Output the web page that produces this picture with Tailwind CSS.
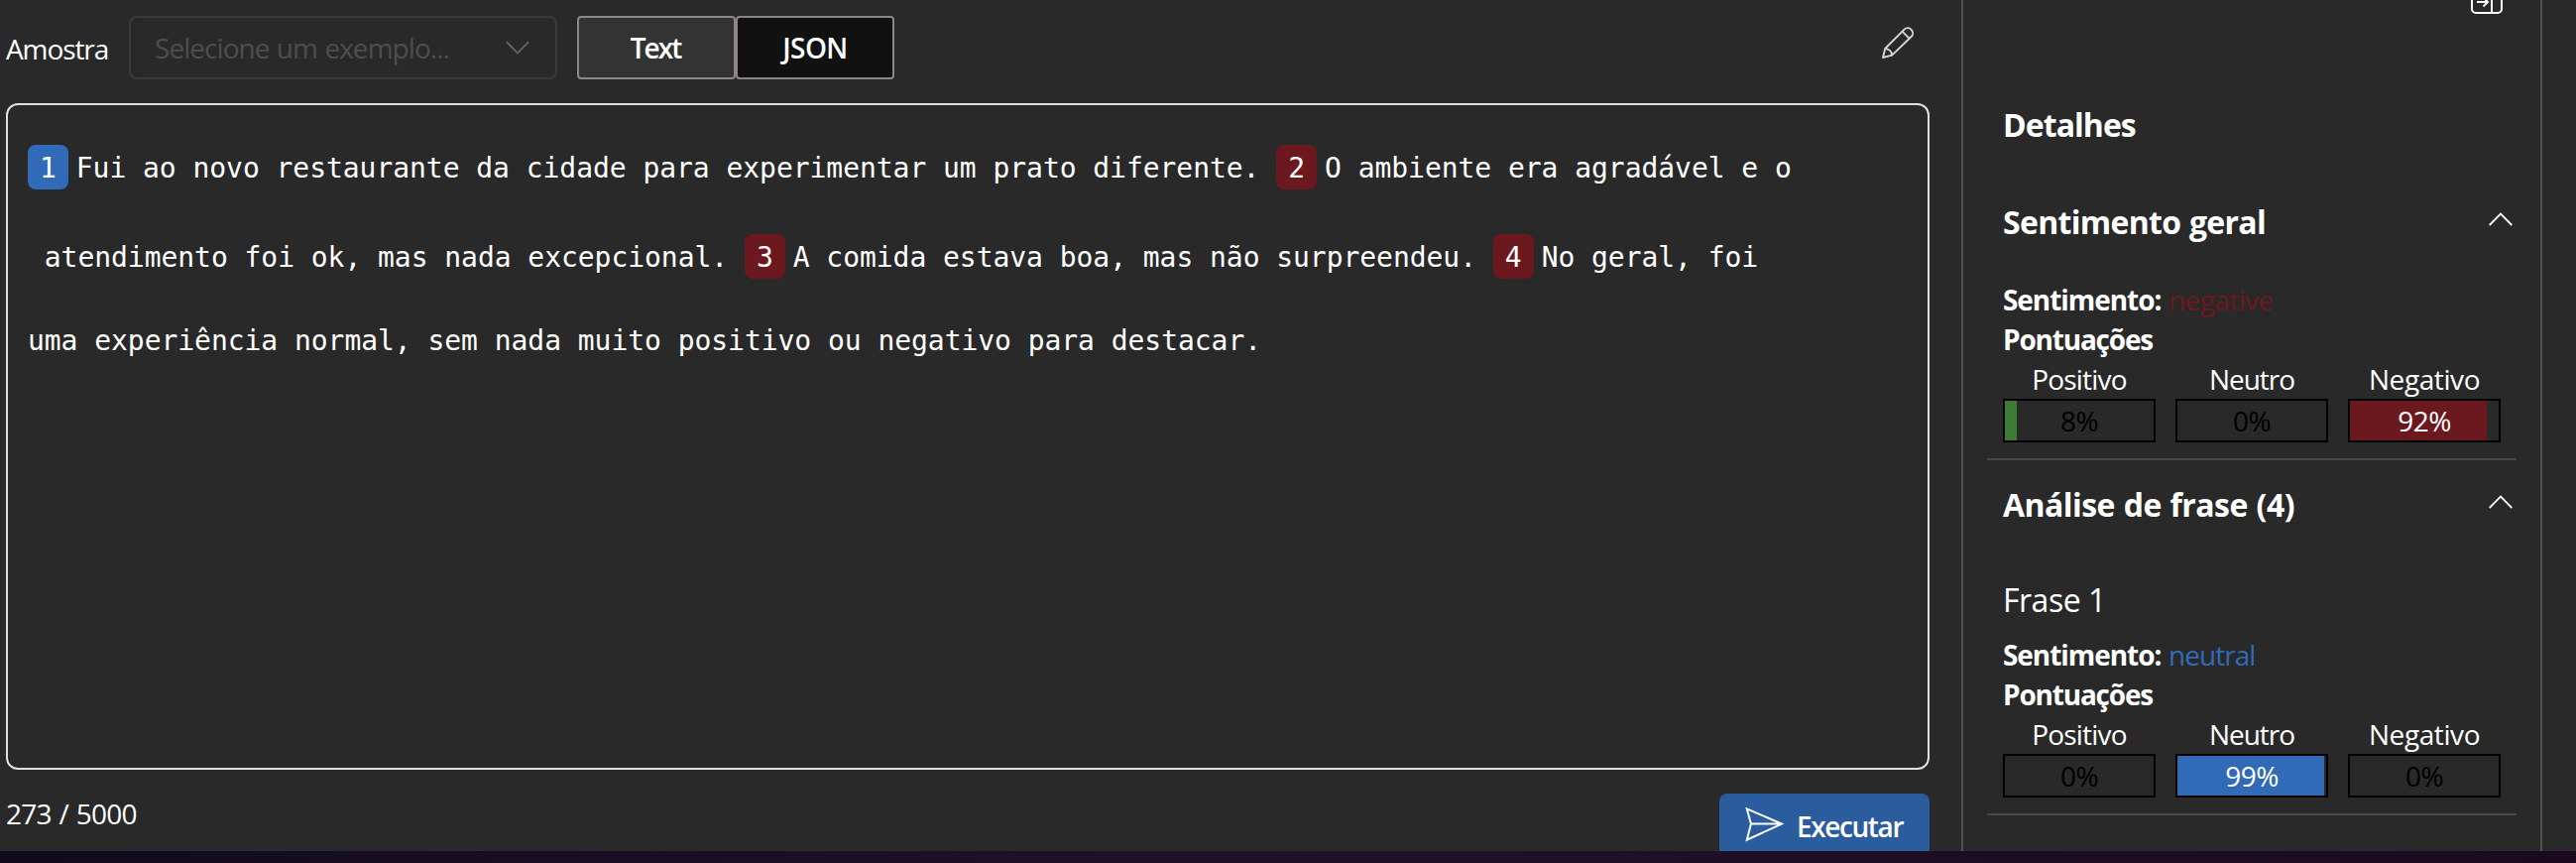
<!DOCTYPE html>
<html lang="pt">
<head>
<meta charset="utf-8">
<title>Análise de sentimento</title>
<script src="https://cdn.jsdelivr.net/npm/@tailwindcss/browser@4"></script>
</head>
<body class="h-[870px] w-[2598px] overflow-hidden bg-[#292929] font-['Open_Sans',sans-serif] text-[28px] leading-10 text-white">
<div class="flex h-[858px] overflow-hidden">
  <main class="flex w-[1980px] shrink-0 flex-col border-r-2 border-[#525252] pl-[6px] pr-8">
    <div class="flex h-[104px] shrink-0 items-start pt-4">
      <span class="w-[124px] pt-[13px] tracking-[-1.1px]">Amostra</span>
      <div class="flex h-16 w-[432px] items-center justify-between rounded-lg border-2 border-[#3a3a3a] pl-6 pr-[26px] text-[#4d4d4d]">
        <span class="tracking-[-0.95px] [word-spacing:1px]">Selecione um exemplo...</span>
        <svg class="h-[14px] w-6" viewBox="0 0 24 14" fill="none" stroke="#626262" stroke-width="1.8"><path d="M.7 1 12 12.4 23.3 1"/></svg>
      </div>
      <div class="ml-5 flex font-semibold">
        <button class="h-16 w-40 rounded border-2 border-[#8a8886] bg-[#333] pr-[2px] tracking-[-2px]">Text</button>
        <button class="h-16 w-40 rounded border-2 border-[#8a8886] bg-[#111] tracking-[-0.6px]">JSON</button>
      </div>
      <svg class="ml-auto mr-4 mt-[11px] h-8 w-8" viewBox="0 0 32 32" fill="none" stroke="#d6d6d6" stroke-width="1.9" stroke-linejoin="round"><path d="M1 31 3.2 22 22.6 2.6a5.1 5.1 0 0 1 7.2 7.2L10.200 28.600ZM20.500 4.700l7 7M3.200 22a7.500 7.500 0 0 1 7 6.600"/></svg>
    </div>
    <section class="h-[672px] shrink-0 rounded-xl border-2 border-[#e0e0e0] pl-5 pt-10 font-['DejaVu_Sans_Mono',monospace] leading-[48px] tracking-[-0.046px]">
      <div class="flex h-[45px] whitespace-pre"><span class="mr-2 h-[45px] rounded-lg bg-[#316bb8] px-3">1</span>Fui ao novo restaurante da cidade para experimentar um prato diferente. <span class="mr-2 h-[45px] rounded-lg bg-[#6b191f] px-3">2</span>O ambiente era agradável e o</div>
      <div class="mt-[45px] flex h-[45px] whitespace-pre"> atendimento foi ok, mas nada excepcional. <span class="mr-2 h-[45px] rounded-lg bg-[#6b191f] px-3">3</span>A comida estava boa, mas não surpreendeu. <span class="mr-2 h-[45px] rounded-lg bg-[#6b191f] px-3">4</span>No geral, foi</div>
      <div class="mt-[39px] h-[45px] whitespace-pre">uma experiência normal, sem nada muito positivo ou negativo para destacar.</div>
    </section>
    <div class="flex shrink-0 items-start justify-between pt-6">
      <span class="tracking-[-0.8px] [word-spacing:1.4px]">273 / 5000</span>
      <button class="flex h-16 w-[212px] items-start rounded-lg bg-[#2b5c9e] pl-[26px] font-semibold">
        <svg class="mt-[13px] h-9 w-10" viewBox="0 0 40 36" fill="none" stroke="#fff" stroke-width="2"><path d="M1.800 2.400 37 17.600 1.800 33.600 6 17.600ZM6 17.600h30"/></svg>
        <span class="ml-[12px] pt-[13px] tracking-[-1.4px]">Executar</span>
      </button>
    </div>
  </main>
  <aside class="flex w-[584px] shrink-0 flex-col border-r-2 border-[#525252] pl-6 pr-6">
    <div class="flex h-[103px] shrink-0 justify-end overflow-hidden pr-[14px]">
      <svg class="-mt-[14px] h-7 w-8" viewBox="0 0 32 28" fill="none" stroke="#fff" stroke-width="2"><rect x="1" y="1" width="30" height="26" rx="4"/><path d="M21 1v26M6 16h11M12.500 11.500 17 16l-4.500 4.500"/></svg>
    </div>
    <h1 class="h-11 shrink-0 pl-4 text-[32px] font-bold leading-[46px] tracking-[-0.95px]">Detalhes</h1>
    <div class="mt-[54px] flex h-11 shrink-0 justify-between pl-4 pr-1 text-[32px] font-bold leading-[46px]">
      <h2 class="tracking-[-0.7px] [word-spacing:1px]">Sentimento geral</h2>
      <svg class="mt-[13px] h-[14px] w-6" viewBox="0 0 24 14" fill="none" stroke="#fff" stroke-width="1.8"><path d="M.7 13 12 1.600 23.300 13"/></svg>
    </div>
    <div class="mt-[37px] shrink-0 border-b-2 border-[#474747] pb-4 pl-4">
      <p class="flex h-10 leading-[41px]"><b class="w-[167px] tracking-[-1.05px]">Sentimento:</b><span class="tracking-[-0.6px] text-[#6b191f]">negative</span></p>
      <p class="h-10 font-bold leading-[41px] tracking-[-1.2px]">Pontuações</p>
      <div class="flex gap-5 text-center">
        <div class="w-[154px]"><div class="tracking-[-0.8px]">Positivo</div><div class="h-11 border-2 border-black tracking-[-0.6px] text-black" style="background:linear-gradient(90deg,#3c7a37 8%,transparent 8%)">8%</div></div>
        <div class="w-[154px]"><div class="tracking-[-1px]">Neutro</div><div class="h-11 border-2 border-black tracking-[-0.6px] text-black">0%</div></div>
        <div class="w-[154px]"><div class="tracking-[-0.4px]">Negativo</div><div class="h-11 border-2 border-black tracking-[-0.6px]" style="background:linear-gradient(90deg,#6b191f 92%,transparent 92%)">92%</div></div>
      </div>
    </div>
    <div class="mt-[22px] flex h-11 shrink-0 justify-between pl-4 pr-1 text-[32px] font-bold leading-[46px]">
      <h2 class="tracking-[-0.55px] [word-spacing:1px]">Análise de frase (4)</h2>
      <svg class="mt-[13px] h-[14px] w-6" viewBox="0 0 24 14" fill="none" stroke="#fff" stroke-width="1.8"><path d="M.7 13 12 1.600 23.300 13"/></svg>
    </div>
    <h3 class="mt-[52px] h-11 shrink-0 pl-4 text-[32px] leading-[46px] tracking-[-0.5px]">Frase 1</h3>
    <div class="mt-[14px] shrink-0 border-b-2 border-[#474747] pb-4 pl-4">
      <p class="flex h-10 leading-[41px]"><b class="w-[167px] tracking-[-1.05px]">Sentimento:</b><span class="tracking-[-0.95px] text-[#316bb8]">neutral</span></p>
      <p class="h-10 font-bold leading-[41px] tracking-[-1.2px]">Pontuações</p>
      <div class="flex gap-5 text-center">
        <div class="w-[154px]"><div class="tracking-[-0.8px]">Positivo</div><div class="h-11 border-2 border-black tracking-[-0.6px] text-black">0%</div></div>
        <div class="w-[154px]"><div class="tracking-[-1px]">Neutro</div><div class="h-11 border-2 border-black tracking-[-0.6px]" style="background:linear-gradient(90deg,#316bb8 99%,transparent 99%)">99%</div></div>
        <div class="w-[154px]"><div class="tracking-[-0.4px]">Negativo</div><div class="h-11 border-2 border-black tracking-[-0.6px] text-black">0%</div></div>
      </div>
    </div>
  </aside>
</div>
<div class="h-3 bg-linear-to-r from-[#110b1c] via-[#20112a] to-[#1b0a1e]"></div>
</body>
</html>
